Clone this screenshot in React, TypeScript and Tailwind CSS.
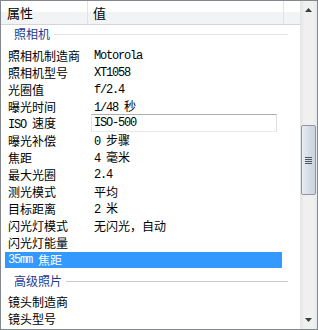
import React from "react";

function T({ text }: { text: string }) {
  const parts = text.match(/[\x00-\x7f]+|[^\x00-\x7f]+/g) || [];
  return (
    <>
      {parts.map((p, i) =>
        /^[\x00-\x7f]+$/.test(p) ? (
          <span key={i} className="font-['Liberation_Mono',monospace] tracking-[-1.2px] whitespace-pre">
            {p}
          </span>
        ) : (
          <span key={i} className="font-['Noto_Sans_CJK_SC',sans-serif]">
            {p}
          </span>
        )
      )}
    </>
  );
}

type Row = { label: string; value: string; input?: boolean; selected?: boolean };

const rows1: Row[] = [
  { label: "照相机制造商", value: "Motorola" },
  { label: "照相机型号", value: "XT1058" },
  { label: "光圈值", value: "f/2.4" },
  { label: "曝光时间", value: "1/48 秒" },
  { label: "ISO 速度", value: "ISO-500", input: true },
  { label: "曝光补偿", value: "0 步骤" },
  { label: "焦距", value: "4 毫米" },
  { label: "最大光圈", value: "2.4" },
  { label: "测光模式", value: "平均" },
  { label: "目标距离", value: "2 米" },
  { label: "闪光灯模式", value: "无闪光，自动" },
  { label: "闪光灯能量", value: "" },
  { label: "35mm 焦距", value: "", selected: true },
];

const rows2: Row[] = [
  { label: "镜头制造商", value: "" },
  { label: "镜头型号", value: "" },
];

function PropRow({ r }: { r: Row }) {
  if (r.selected) {
    return (
      <div className="h-[17px] flex items-center">
        <div className="ml-[4px] w-[277px] h-[16px] bg-[#3399ff] text-white pl-[3px] flex items-center leading-[16px]">
          <T text={r.label} />
        </div>
      </div>
    );
  }
  return (
    <div className="h-[17px] flex items-center leading-[17px]">
      <div className="w-[93px] shrink-0 pl-[7px] whitespace-nowrap">
        <T text={r.label} />
      </div>
      <div className="flex-1 whitespace-nowrap">
        {r.input ? (
          <div className="-ml-[3px] w-[186px] h-[18px] -mt-[1px] border border-[#abadb3] border-l-[#e2e3ea] border-r-[#dbdfe6] border-b-[#e3e9ef] bg-white pl-[2px] flex items-center">
            <T text={r.value} />
          </div>
        ) : (
          <T text={r.value} />
        )}
      </div>
    </div>
  );
}

function Group({ title, lineColor, first }: { title: string; lineColor: string; first?: boolean }) {
  return (
    <div className={first ? "h-[22px]" : "h-[25px] pt-[4px]"}>
      <div className="h-[18px] flex items-center pl-[13px] pr-[12px]">
        <span className="text-[#1e3a8f] font-['Noto_Sans_CJK_SC',sans-serif] leading-[18px]">{title}</span>
        <div className={`flex-1 h-px ml-[4px] ${lineColor}`} />
      </div>
    </div>
  );
}

export default function App() {
  return (
    <div className="w-[318px] h-[330px] border border-[#828790] bg-white flex text-[12px] text-black overflow-hidden">
      <div className="flex-1 flex flex-col min-w-0">
        <div className="h-[24px] shrink-0 flex border-b border-[#d5d5d5] bg-[linear-gradient(to_bottom,#ffffff_0%,#ffffff_45%,#f2f3f5_50%,#f2f3f5_100%)] font-['Noto_Sans_CJK_SC',sans-serif] text-[13px]">
          <div className="w-[86px] pl-[6px] flex items-center">属性</div>
          <div className="w-px bg-[#e0e2e6]" />
          <div className="w-[195px] pl-[5px] flex items-center">值</div>
          <div className="w-px bg-[#e0e2e6]" />
          <div className="flex-1" />
        </div>
        <Group title="照相机" lineColor="bg-[#e3e3e3]" first />
        {rows1.map((r, i) => (
          <PropRow key={i} r={r} />
        ))}
        <Group title="高级照片" lineColor="bg-[#c5c9d1]" />
        {rows2.map((r, i) => (
          <PropRow key={i} r={r} />
        ))}
      </div>
      <div className="w-[17px] shrink-0 flex flex-col bg-[linear-gradient(to_right,#e4e4e4,#f0f0f0_25%,#f0f0f0_75%,#e8e8e8)]">
        <div className="h-[18px] flex items-center justify-center">
          <svg width="7" height="4" viewBox="0 0 7 4">
            <path d="M0 4 L3.5 0 L7 4Z" fill="#3a3f47" />
          </svg>
        </div>
        <div className="flex-1 flex flex-col">
          <div className="mt-[106px] mx-auto w-[15px] h-[70px] rounded-[2px] border border-[#8f969f] bg-[linear-gradient(to_right,#e8edf3,#d6dde7_50%,#c9d2dd)] flex items-center justify-center">
            <div className="flex flex-col gap-[1px]">
              <div className="w-[7px] h-px bg-[#4d5561]" />
              <div className="w-[7px] h-px bg-[#4d5561]" />
              <div className="w-[7px] h-px bg-[#4d5561]" />
              <div className="w-[7px] h-px bg-[#4d5561]" />
            </div>
          </div>
        </div>
        <div className="h-[18px] flex items-center justify-center">
          <svg width="7" height="4" viewBox="0 0 7 4">
            <path d="M0 0 L7 0 L3.5 4Z" fill="#3a3f47" />
          </svg>
        </div>
      </div>
    </div>
  );
}
